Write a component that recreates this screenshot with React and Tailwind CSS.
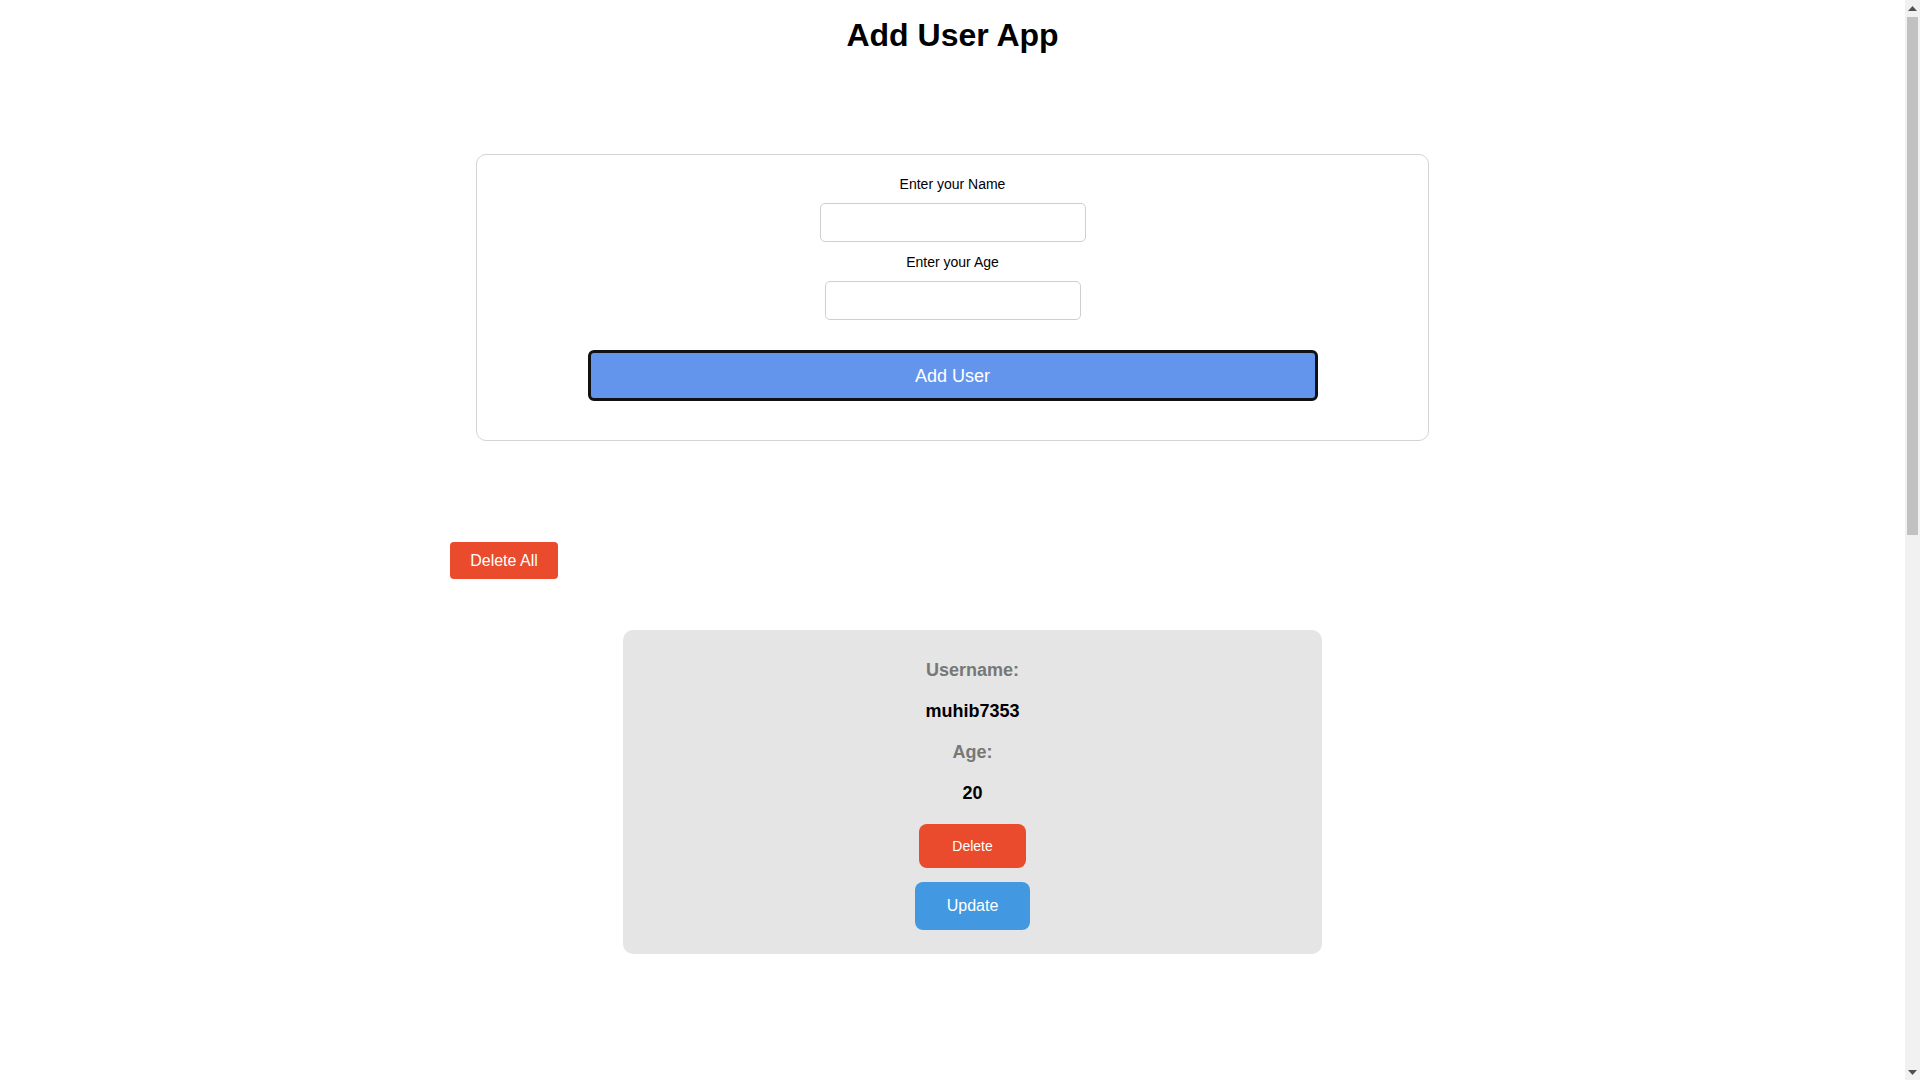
import React from "react";

function FakeScrollbar() {
  return (
    <div className="flex h-full w-[15px] shrink-0 flex-col items-center bg-[#f1f1f1]">
      <div className="flex h-[16px] w-full items-center justify-center">
        <svg width="9" height="5" viewBox="0 0 9 5">
          <polygon points="0,5 4.5,0 9,5" fill="#505050" />
        </svg>
      </div>
      <div className="mt-[1px] h-[518px] w-[11px] bg-[#c1c1c1]" />
      <div className="flex-1" />
      <div className="flex h-[16px] w-full items-center justify-center">
        <svg width="9" height="5" viewBox="0 0 9 5">
          <polygon points="0,0 9,0 4.5,5" fill="#505050" />
        </svg>
      </div>
    </div>
  );
}

export default function App() {
  return (
    <div
      className="flex h-screen w-full overflow-hidden bg-white text-black"
      style={{ fontFamily: '"Liberation Sans", Arial, sans-serif' }}
    >
      <main className="w-[1905px] shrink-0">
        <h1 className="pt-[17px] text-center text-[32px] font-bold leading-[37px]">
          Add User App
        </h1>

        <div className="mx-auto mt-[100px] w-1/2 rounded-[10px] border border-[#d4d4d4] pt-[21px] pb-[39px]">
          <div className="flex flex-col items-center">
            <label className="text-[14px] leading-[16px]">Enter your Name</label>
            <input
              type="text"
              className="mt-[11px] h-[39px] w-[266px] rounded-[5px] border border-[#cfcfcf] bg-white px-2 outline-none"
            />
            <label className="mt-[12px] text-[14px] leading-[16px]">Enter your Age</label>
            <input
              type="text"
              className="mt-[11px] h-[39px] w-[256px] rounded-[5px] border border-[#cfcfcf] bg-white px-2 outline-none"
            />
            <button className="mt-[30px] flex h-[51px] w-[730px] items-center justify-center rounded-[6px] border-[3px] border-[#111111] bg-[#6495ed] pt-[1px] text-[18px] text-white">
              Add User
            </button>
          </div>
        </div>

        <div className="mx-auto mt-[101px] w-[1005px]">
          <button className="flex h-[37px] w-[108px] items-center justify-center rounded-[4px] bg-[#e94b2c] text-[16px] text-white">
            Delete All
          </button>

          <ul className="mt-[51px] pl-10">
            <li className="mx-auto flex w-[699px] flex-col items-center rounded-[10px] bg-[#e5e5e5] pt-[30px] pb-[24px]">
              <p className="text-[18px] font-bold leading-[20.7px] text-[#777777]">Username:</p>
              <p className="mt-[20.3px] text-[18px] font-bold leading-[20.7px] text-black">muhib7353</p>
              <p className="mt-[20.5px] text-[18px] font-bold leading-[20.7px] text-[#777777]">Age:</p>
              <p className="mt-[20.5px] text-[18px] font-bold leading-[20.7px] text-black">20</p>
              <button className="mt-[20px] flex h-[44px] w-[107px] items-center justify-center rounded-[8px] bg-[#e94b2c] text-[14px] text-white">
                Delete
              </button>
              <button className="mt-[14px] flex h-[48px] w-[115px] items-center justify-center rounded-[8px] bg-[#4299e1] text-[16px] text-white">
                Update
              </button>
            </li>
          </ul>
        </div>
      </main>
      <FakeScrollbar />
    </div>
  );
}
